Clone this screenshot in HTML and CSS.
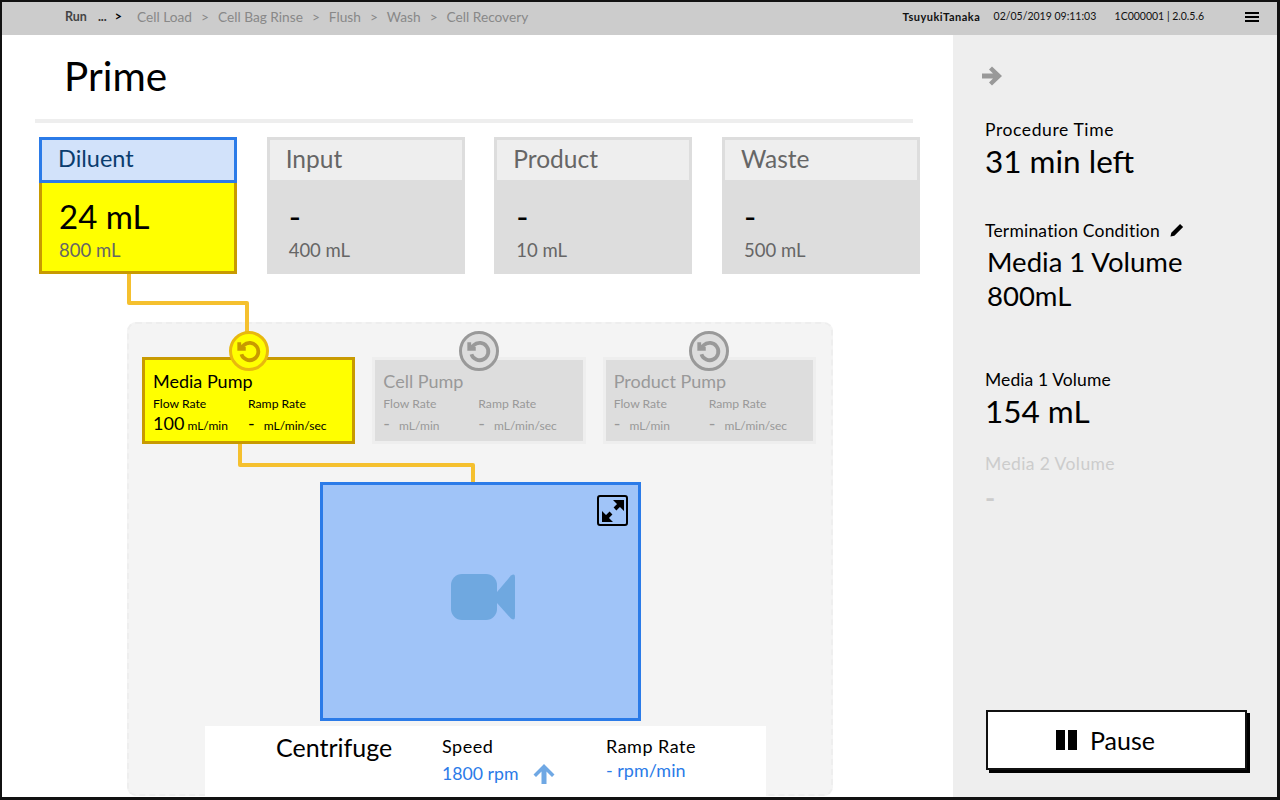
FILE: index.html
```html
<!DOCTYPE html>
<html lang="en">
<head>
  <meta charset="UTF-8" />
  <meta name="viewport" content="width=device-width, initial-scale=1.0" />
  <title>Prime</title>
  <link rel="stylesheet" href="styles.css">
</head>
<body>

<div class="frame">
  <header class="topbar">
    <nav class="crumbs">
      <span class="crumb-run">Run</span>
      <span class="crumb-run crumb-more">...</span>
      <span class="crumb-run crumb-sep-on">&gt;</span>
      <span class="crumb-step">Cell Load</span>
      <span class="crumb-sep">&gt;</span>
      <span class="crumb-step">Cell Bag Rinse</span>
      <span class="crumb-sep">&gt;</span>
      <span class="crumb-step">Flush</span>
      <span class="crumb-sep">&gt;</span>
      <span class="crumb-step">Wash</span>
      <span class="crumb-sep">&gt;</span>
      <span class="crumb-step">Cell Recovery</span>
    </nav>
    <div class="status">
      <span class="status-user">TsuyukiTanaka</span>
      <span class="status-date">02/05/2019 09:11:03</span>
      <span class="status-id">1C000001 | 2.0.5.6</span>
    </div>
    <div class="menu-icon"><span></span><span></span><span></span></div>
  </header>

  <div class="content">
    <main class="main">
      <h1 class="page-title">Prime</h1>
      <div class="rule"></div>

      <section class="tanks">
        <div class="tank tank-active">
          <div class="tank-name">Diluent</div>
          <div class="tank-body">
            <div class="tank-value">24 mL</div>
            <div class="tank-cap">800 mL</div>
          </div>
        </div>
        <div class="tank">
          <div class="tank-name">Input</div>
          <div class="tank-body">
            <div class="tank-value">-</div>
            <div class="tank-cap">400 mL</div>
          </div>
        </div>
        <div class="tank">
          <div class="tank-name">Product</div>
          <div class="tank-body">
            <div class="tank-value">-</div>
            <div class="tank-cap">10 mL</div>
          </div>
        </div>
        <div class="tank">
          <div class="tank-name">Waste</div>
          <div class="tank-body">
            <div class="tank-value">-</div>
            <div class="tank-cap">500 mL</div>
          </div>
        </div>
      </section>

      <section class="machine">
        <svg class="lines" width="706" height="474" fill="none">
          <polyline points="0,-50 0,-21 118,-21 118,8" />
          <polyline points="111,120 111,141 344,141 344,158" />
        </svg>

        <div class="pumps">
          <div class="pump pump-active">
            <div class="pump-badge">
              <svg viewBox="0 0 24 24" width="26" height="26" fill="none"><polyline points="3,4 3,10 9,10" /><path d="M5 15a8 8 0 1 0 2-8.200L3 10" /></svg>
            </div>
            <div class="pump-name">Media Pump</div>
            <div class="pump-rates">
              <div>
                <div class="rate-label">Flow Rate</div>
                <div class="rate-value"><b class="rate-num">100</b> mL/min</div>
              </div>
              <div>
                <div class="rate-label">Ramp Rate</div>
                <div class="rate-value"><b class="rate-dash">-</b> mL/min/sec</div>
              </div>
            </div>
          </div>
          <div class="pump">
            <div class="pump-badge">
              <svg viewBox="0 0 24 24" width="26" height="26" fill="none"><polyline points="3,4 3,10 9,10" /><path d="M5 15a8 8 0 1 0 2-8.200L3 10" /></svg>
            </div>
            <div class="pump-name">Cell Pump</div>
            <div class="pump-rates">
              <div>
                <div class="rate-label">Flow Rate</div>
                <div class="rate-value"><b class="rate-dash">-</b> mL/min</div>
              </div>
              <div>
                <div class="rate-label">Ramp Rate</div>
                <div class="rate-value"><b class="rate-dash">-</b> mL/min/sec</div>
              </div>
            </div>
          </div>
          <div class="pump">
            <div class="pump-badge">
              <svg viewBox="0 0 24 24" width="26" height="26" fill="none"><polyline points="3,4 3,10 9,10" /><path d="M5 15a8 8 0 1 0 2-8.200L3 10" /></svg>
            </div>
            <div class="pump-name">Product Pump</div>
            <div class="pump-rates">
              <div>
                <div class="rate-label">Flow Rate</div>
                <div class="rate-value"><b class="rate-dash">-</b> mL/min</div>
              </div>
              <div>
                <div class="rate-label">Ramp Rate</div>
                <div class="rate-value"><b class="rate-dash">-</b> mL/min/sec</div>
              </div>
            </div>
          </div>
        </div>

        <div class="video">
          <div class="expand">
            <svg viewBox="0 0 26 26" width="26" height="26"><path d="M13 2h11v11zM2 13v11h11z" fill="#000" /><path d="M19 7l-4 4M11 15l-4 4" stroke="#000" stroke-width="4" /></svg>
          </div>
          <svg class="camera" viewBox="0 0 64 46" width="64" height="46"><rect width="46" height="46" rx="11" /><path d="M46 18 60 1.500q4-2.500 4 1.500v40q0 4-4 1.500L46 29z" /></svg>
        </div>

        <div class="centrifuge">
          <div class="cf-name">Centrifuge</div>
          <div class="cf-speed">
            <div class="cf-label">Speed</div>
            <div class="cf-value">1800 rpm
              <svg viewBox="0 0 22 22" width="22" height="22"><path d="M11 1 21.500 11.500 19 14l-5.500-5.500V21h-5V8.500L3 14 0.500 11.500z" fill="#6fa8e4" /></svg>
            </div>
          </div>
          <div class="cf-ramp">
            <div class="cf-label">Ramp Rate</div>
            <div class="cf-value cf-value-up">- rpm/min</div>
          </div>
        </div>
      </section>
    </main>

    <aside class="side">
      <svg class="side-arrow" viewBox="0 0 20 20" width="20" height="20"><path d="M10 0.500 20 10 10 19.500 7 16.500 11 12.500H0v-5h11L7 3.500z" fill="#999" /></svg>

      <div class="stat stat-time">
        <div class="stat-label">Procedure Time</div>
        <div class="stat-value stat-big">31 min left</div>
      </div>
      <div class="stat stat-cond">
        <div class="stat-label">Termination Condition
          <svg viewBox="0 0 16 16" width="14" height="14"><path d="M11.500 1 15 4.500 5 14.500 0.500 15.500 1.500 11z" fill="#000" /></svg>
        </div>
        <div class="stat-value">Media 1 Volume<br>800mL</div>
      </div>
      <div class="stat stat-vol">
        <div class="stat-label">Media 1 Volume</div>
        <div class="stat-value stat-big">154 mL</div>
      </div>
      <div class="stat stat-off">
        <div class="stat-label">Media 2 Volume</div>
        <div class="stat-value">-</div>
      </div>

      <button class="pause"><span class="pause-icon"></span>Pause</button>
    </aside>
  </div>
</div>

</body>
</html>
```

FILE: styles.css
```css
* {
  box-sizing: border-box;
}

body {
  margin: 0;
  font-family: Lato, "Noto Sans", sans-serif;
  background: #fff;
  color: #000;
}

.frame {
  width: 1280px;
  height: 800px;
  display: flex;
  flex-direction: column;
  border: solid #111;
  border-width: 2px 3px 3px 2px;
  overflow: hidden;
}

/* top bar */
.topbar {
  height: 33px;
  flex: none;
  display: flex;
  align-items: center;
  background: #ccc;
  padding: 0 18px 5px 63px;
}

.crumbs {
  display: flex;
  align-items: center;
  font-size: 13.700px;
  color: #888;
  flex: 1;
}

.crumb-run {
  font-size: 12.500px;
  font-weight: 700;
  color: #444;
}

.crumb-more {
  margin-left: 11px;
  color: #333;
}

.crumb-sep-on {
  margin-left: 8px;
  margin-right: 15px;
  color: #000;
}

.crumb-sep {
  margin: 0 9px;
}

.status {
  display: flex;
  font-size: 10.500px;
  color: #111;
  margin-right: 41px;
}

.status-user {
  font-weight: 700;
  font-size: 11px;
  letter-spacing: 0.5px;
  width: 91px;
}

.status-date {
  width: 121px;
}

.menu-icon {
  width: 14px;
  display: flex;
  flex-direction: column;
  gap: 2px;
  margin-top: 1px;
}

.menu-icon span {
  height: 2px;
  background: #000;
}

.content {
  flex: 1;
  display: flex;
  min-height: 0;
}

/* main area */
.main {
  width: 951px;
  padding-left: 33px;
}

.page-title {
  margin: 0;
  padding: 18px 0 0 29px;
  height: 84px;
  font-size: 40.500px;
  font-weight: 400;
  line-height: 46px;
}

.rule {
  width: 878px;
  height: 4px;
  background: #eee;
}

.tanks {
  width: 881px;
  margin: 14px 0 0 4px;
  display: flex;
  justify-content: space-between;
}

.tank {
  width: 198px;
  height: 137px;
  background: #ddd;
  color: #666;
}

.tank-name {
  height: 43px;
  padding: 3px 0 0 16px;
  font-size: 24.500px;
  line-height: 32px;
  background: #eee;
  border: 3px solid #ddd;
  border-bottom: none;
}

.tank-body {
  padding: 17px 0 0 22px;
}

.tank-value {
  font-size: 33px;
  line-height: 38px;
  color: #000;
}

.tank-cap {
  font-size: 18.500px;
  line-height: 24px;
  margin-top: 3px;
}

.tank-active .tank-name {
  height: 46px;
  background: #d2e2fa;
  color: #0b3d6e;
  font-size: 23.500px;
  border: 3px solid #2b7be8;
  padding-top: 2px;
}

.tank-active .tank-body {
  height: 91px;
  background: #ff0;
  border: 3px solid #c89a00;
  border-top: none;
  padding: 14px 0 0 17px;
}

/* machine diagram */
.machine {
  position: relative;
  width: 706px;
  height: 474px;
  margin: 48px 0 0 92px;
  background: #f4f4f4;
  border: 2px dashed #eee;
  border-radius: 9px;
}

.lines {
  position: absolute;
  left: 0;
  top: 0;
  overflow: visible;
}

.lines polyline {
  stroke: #f5c02e;
  stroke-width: 4;
  stroke-linejoin: round;
}

.pumps {
  display: flex;
  gap: 17px;
  padding: 33px 15px 0 13px;
}

.pump {
  position: relative;
  flex: 1;
  height: 87px;
  padding: 11px 0 0 8px;
  background: #ddd;
  border: 3px solid #eee;
  color: #999;
}

.pump-active {
  background: #ff0;
  border-color: #c89a00;
  color: #000;
}

.pump-badge {
  position: absolute;
  left: 50%;
  top: -29px;
  width: 40px;
  height: 40px;
  margin-left: -20px;
  display: flex;
  align-items: center;
  justify-content: center;
  border-radius: 50%;
  background: #ddd;
  border: 3px solid #999;
}

.pump-badge svg {
  stroke: #999;
  stroke-width: 3.500;
}

.pump-active .pump-badge {
  background: #ff0;
  border-color: #e8b80e;
}

.pump-active .pump-badge svg {
  stroke: #c89a00;
}

.pump-name {
  font-size: 18px;
  line-height: 20px;
}

.pump-rates {
  display: grid;
  grid-template-columns: 95px 1fr;
  margin-top: 5px;
}

.rate-label {
  font-size: 12.200px;
  line-height: 16px;
}

.rate-value {
  font-size: 12px;
  line-height: 22px;
}

.rate-value b {
  font-size: 18px;
  font-weight: 400;
}

.rate-dash {
  margin-right: 6px;
}

.video {
  position: relative;
  width: 321px;
  height: 239px;
  margin: 38px 0 0 191px;
  display: flex;
  align-items: center;
  justify-content: center;
  background: #a0c4f8;
  border: 3px solid #2b7be8;
}

.camera {
  fill: #6fa8e0;
  margin: 0 0 9px 4px;
}

.expand {
  position: absolute;
  right: 10px;
  top: 10px;
  width: 31px;
  height: 31px;
  display: flex;
  align-items: center;
  justify-content: center;
  border: 2px solid #000;
  border-radius: 3px;
}

.centrifuge {
  width: 561px;
  height: 70px;
  margin: 5px 0 0 76px;
  background: #fff;
  display: flex;
  padding-top: 8px;
}

.cf-name {
  width: 237px;
  padding-left: 71px;
  font-size: 25px;
  line-height: 26px;
}

.cf-speed {
  width: 164px;
}

.cf-label {
  font-size: 18px;
  letter-spacing: 0.5px;
  line-height: 24px;
}

.cf-value {
  display: flex;
  align-items: center;
  gap: 15px;
  font-size: 17.700px;
  line-height: 24px;
  margin-top: 4px;
  color: #2b7be8;
}

.cf-value-up {
  margin-top: 0;
  font-size: 18px;
}

/* right panel */
.side {
  flex: 1;
  display: flex;
  flex-direction: column;
  background: #eee;
  padding: 31px 30px 27px 32px;
}

.side-arrow {
  flex: none;
  margin-left: -3px;
}

.stat-time {
  margin-top: 33px;
}

.stat-cond {
  margin-top: 41px;
}

.stat-cond .stat-label {
  letter-spacing: 0.2px;
}

.stat-cond .stat-value {
  margin-left: 2px;
}

.stat-vol {
  margin-top: 56px;
}

.stat-vol .stat-label {
  letter-spacing: 0.1px;
}

.stat-off {
  margin-top: 24px;
  color: #ccc;
}

.stat-off .stat-label {
  letter-spacing: 0.4px;
}

.stat-off .stat-value {
  margin-top: 6px;
  font-weight: 700;
}

.stat-label {
  font-size: 17.500px;
  letter-spacing: 0.6px;
  line-height: 22px;
}

.stat-label svg {
  margin-left: 5px;
}

.stat-value {
  font-size: 27.500px;
  line-height: 34px;
  margin-top: 3px;
}

.stat-big {
  font-size: 31.500px;
  line-height: 36px;
  margin-top: 2px;
}

.pause {
  margin-top: auto;
  margin-left: 1px;
  width: 261px;
  height: 60px;
  display: flex;
  align-items: center;
  justify-content: center;
  gap: 13px;
  padding-right: 28px;
  background: #fff;
  border: 2px solid #111;
  box-shadow: 3px 3px 0 #000;
  font: inherit;
  font-size: 25px;
  color: #000;
}

.pause-icon {
  width: 21px;
  height: 20px;
  border: solid #000;
  border-width: 0 9px;
}
```
